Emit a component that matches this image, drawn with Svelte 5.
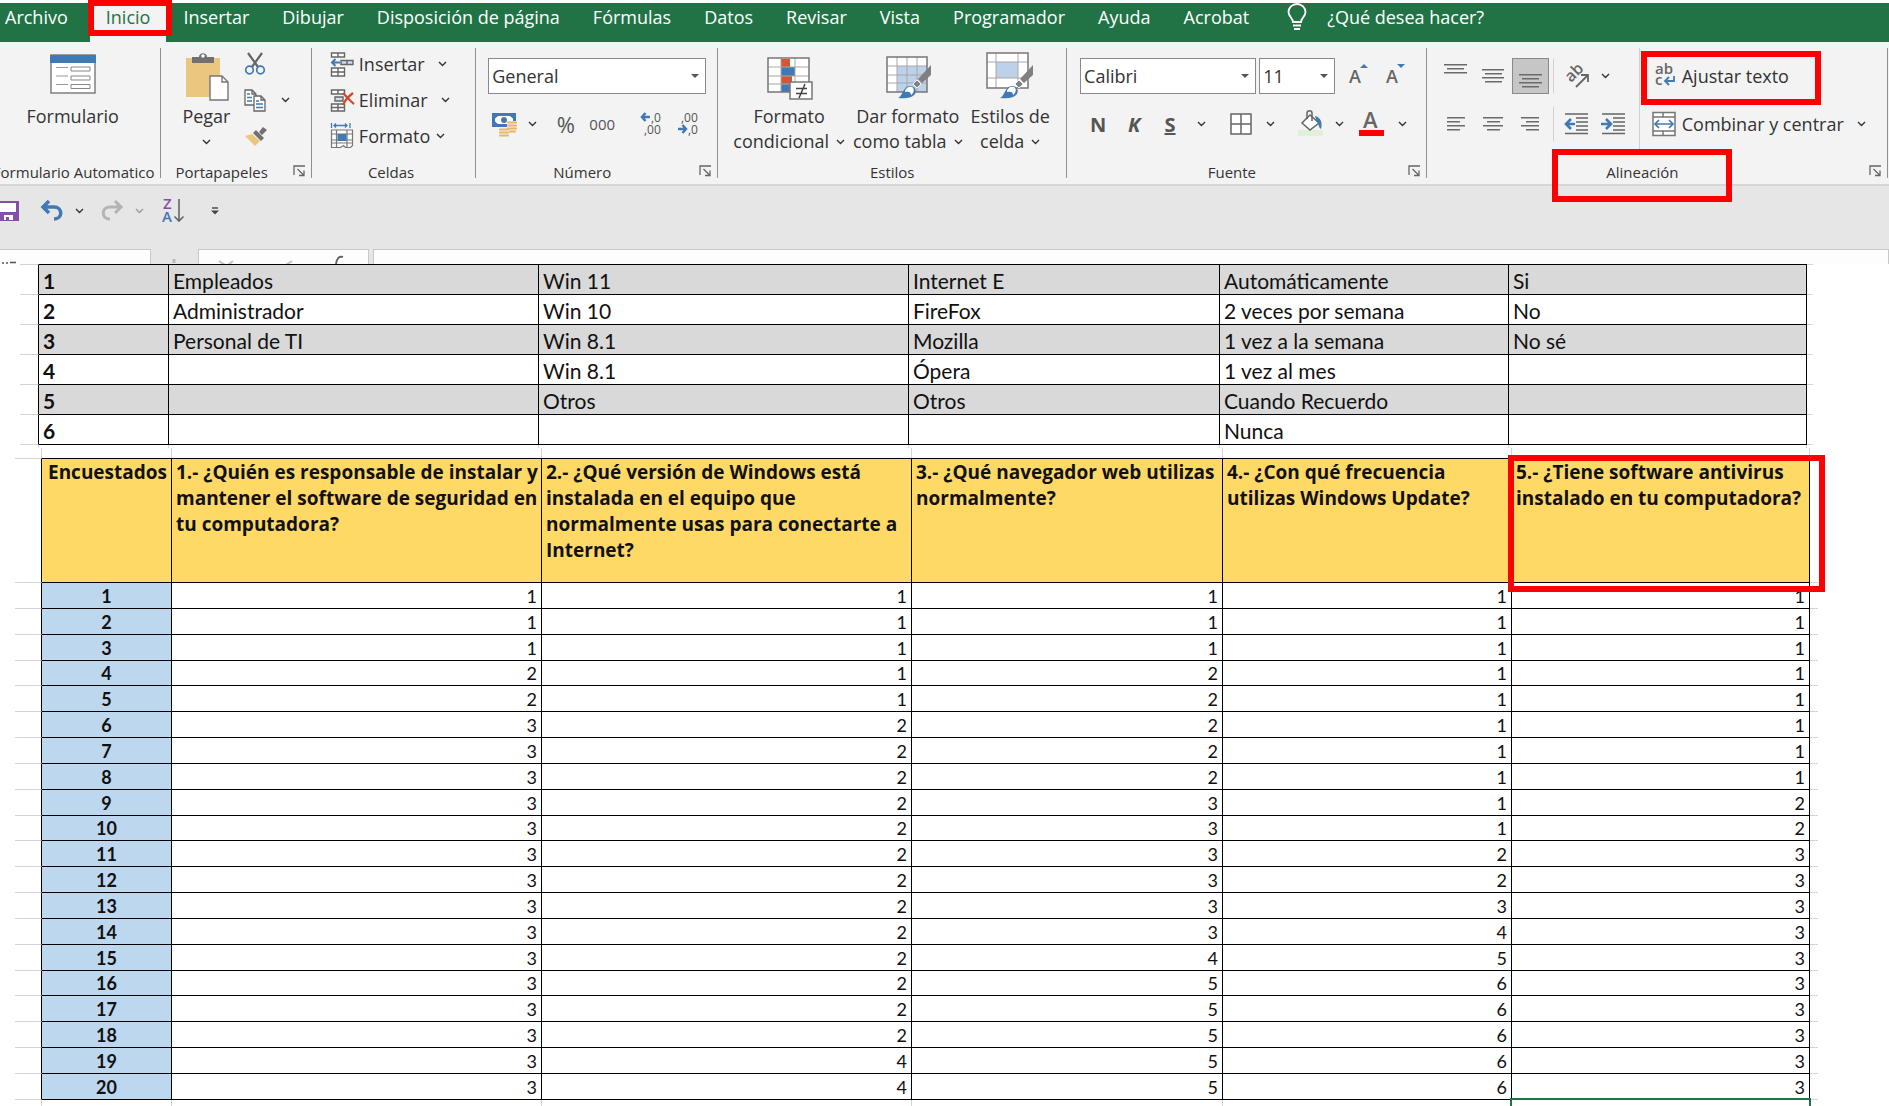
<script>
  const tabs = [
    'Archivo', 'Inicio', 'Insertar', 'Dibujar', 'Disposición de página', 'Fórmulas', 'Datos',
    'Revisar', 'Vista', 'Programador', 'Ayuda', 'Acrobat'
  ];
  let activeTab = $state('Inicio');

  let numberFormat = $state('General');
  let fontName = $state('Calibri');
  let fontSize = $state('11');

  const columns = [130, 370, 370, 311, 289, 298];

  const options = [
    ['Empleados', 'Win 11', 'Internet E', 'Automáticamente', 'Si'],
    ['Administrador', 'Win 10', 'FireFox', '2 veces por semana', 'No'],
    ['Personal de TI', 'Win 8.1', 'Mozilla', '1 vez a la semana', 'No sé'],
    ['', 'Win 8.1', 'Ópera', '1 vez al mes', ''],
    ['', 'Otros', 'Otros', 'Cuando Recuerdo', ''],
    ['', '', '', 'Nunca', '']
  ];

  const questions = [
    '1.- ¿Quién es responsable de instalar y mantener el software de seguridad en tu computadora?',
    '2.- ¿Qué versión de Windows está instalada en el equipo que normalmente usas para conectarte a Internet?',
    '3.- ¿Qué navegador web utilizas normalmente?',
    '4.- ¿Con qué frecuencia utilizas Windows Update?',
    '5.- ¿Tiene software antivirus instalado en tu computadora?'
  ];

  const answers = [
    [1, 1, 1, 1, 1], [1, 1, 1, 1, 1], [1, 1, 1, 1, 1], [2, 1, 2, 1, 1], [2, 1, 2, 1, 1],
    [3, 2, 2, 1, 1], [3, 2, 2, 1, 1], [3, 2, 2, 1, 1], [3, 2, 3, 1, 2], [3, 2, 3, 1, 2],
    [3, 2, 3, 2, 3], [3, 2, 3, 2, 3], [3, 2, 3, 3, 3], [3, 2, 3, 4, 3], [3, 2, 4, 5, 3],
    [3, 2, 5, 6, 3], [3, 2, 5, 6, 3], [3, 2, 5, 6, 3], [3, 4, 5, 6, 3], [3, 4, 5, 6, 3]
  ];
</script>

{#snippet chevron()}
  <svg class="chevron" width="9" height="6" viewBox="0 0 9 6"><path d="M1 1l3.500 3.500L8 1" fill="none" stroke="currentColor" stroke-width="1.400" /></svg>
{/snippet}

{#snippet drop(label)}
  <button class="drop" aria-label={label}>{@render chevron()}</button>
{/snippet}

{#snippet launcher(label)}
  <button class="launcher" aria-label={label}>
    <svg width="13" height="12" viewBox="0 0 13 12"><path d="M1 10V1h11M4.500 4l6 6M11 5.500v5H6" fill="none" stroke="#666" stroke-width="1.300" /></svg>
  </button>
{/snippet}

{#snippet lines(rows)}
  <svg width="24" height="24" viewBox="0 0 24 24">
    {#each rows as [x, y, w]}
      <rect {x} {y} width={w} height="1.500" fill="#6a6a6a" />
    {/each}
  </svg>
{/snippet}

{#snippet brush()}
  <path d="M47 13v10L38 31l-4-4z" fill="#808080" />
  <path d="M33 28l4 4-4 4-4-4z" fill="#808080" stroke="#f3f3f3" />
  <path d="M14 46c5-2 5-12 12-12 5 0 7 4 5 8-3 4-9 5-17 4z" fill="#4179b5" />
  <path d="M21 40c0-4 4-6 7-5 3 2 2 6-1 8 0-3-2-4-6-3z" fill="#fff" />
{/snippet}

{#snippet cols(left, right)}
  {@const total = columns.reduce((a, b) => a + b, left + right)}
  <colgroup>
    {#each [left, ...columns, right] as c}
      <col style="width: {(c / total) * 100}%" />
    {/each}
  </colgroup>
{/snippet}

<div class="app">
  <nav class="tabs">
    {#each tabs as tab}
      <button class="tab" class:active={tab === activeTab} onclick={() => (activeTab = tab)}>{tab}</button>
    {/each}
    <button class="tell-me">
      <svg width="20" height="28" viewBox="0 0 20 28">
        <path d="M6 19c0-4-4.500-5-4.500-10a8.500 8 0 0 1 17 0c0 5-4.500 6-4.500 10z" fill="none" stroke="#fff" stroke-width="1.800" />
        <path d="M6 22.500h8M7 26h6" stroke="#fff" stroke-width="2" />
      </svg>
      ¿Qué desea hacer?
    </button>
  </nav>

  <div class="ribbon">
    <section class="group form">
      <div class="body">
        <button class="big">
          <svg width="48" height="48" viewBox="0 0 48 48">
            <rect x="2" y="3" width="44" height="38" fill="#fff" stroke="#777" stroke-width="1.400" />
            <rect x="1" y="3" width="46" height="8" fill="#4179b5" />
            <path d="M7 15.500h12M7 24h12M7 32.500h12" stroke="#999" />
            <path d="M22 15h19v4H22zM22 24h19v4H22zM22 32.500h19v4H22z" fill="none" stroke="#888" />
          </svg>
          <span>Formulario</span>
        </button>
      </div>
      <footer><h2>Formulario Automatico</h2></footer>
    </section>

    <section class="group clipboard">
      <div class="body">
        <button class="big">
          <svg width="48" height="48" viewBox="0 0 48 48">
            <path d="M4 6h34v39H4z" fill="#ebc67f" />
            <path d="M10 11V5h7c0-5 8-5 8 0h7v6z" fill="#707070" />
            <circle cx="21" cy="4" r="1.800" fill="#fff" />
            <path d="M28 24h12l6 6v18H28z" fill="#fff" stroke="#777" stroke-width="1.400" />
            <path d="M40 24v6h6" fill="none" stroke="#777" stroke-width="1.400" />
          </svg>
          <span>Pegar</span>
          <span>{@render chevron()}</span>
        </button>
        <div class="stack">
          <button class="small" aria-label="Cortar">
            <svg width="24" height="24" viewBox="0 0 24 24">
              <path d="M5 1l10 14M19 1L9 15" stroke="#666" stroke-width="2.200" />
              <circle cx="6.500" cy="18" r="3.800" fill="none" stroke="#4179b5" stroke-width="1.700" />
              <circle cx="17.500" cy="18" r="3.800" fill="none" stroke="#4179b5" stroke-width="1.700" />
            </svg>
          </button>
          <div class="line">
            <button class="small" aria-label="Copiar">
              <svg width="24" height="24" viewBox="0 0 24 24">
                <path d="M2 2h7l4 4v11H2zM9 2v4h4" fill="#fff" stroke="#666" stroke-width="1.300" />
                <path d="M4 6h3M4 9.500h5M4 13h5" stroke="#4179b5" stroke-width="1.300" />
                <path d="M11 8h7l4 4v11H11zM18 8v4h4" fill="#fff" stroke="#666" stroke-width="1.300" />
                <path d="M13 13h3M13 16h7M13 19.500h7" stroke="#4179b5" stroke-width="1.300" />
              </svg>
            </button>
            {@render drop('Opciones de copiar')}
          </div>
          <button class="small" aria-label="Copiar formato">
            <svg width="24" height="24" viewBox="0 0 24 24">
              <path d="M2 12l7-2 8 7-5 5z" fill="#ebc67f" />
              <path d="M10 9l3-3 8 8-3 3zM16 8l4-5 4 3-5 5z" fill="#707070" />
            </svg>
          </button>
        </div>
      </div>
      <footer><h2>Portapapeles</h2>{@render launcher('Opciones del portapapeles')}</footer>
    </section>

    <section class="group cells">
      <div class="body stack">
        <button class="row">
          <svg width="24" height="24" viewBox="0 0 24 24">
            <path d="M1.500 1h13v4h-13zM8 1v4M1.500 16h13v8h-13zM8 16v8M1.500 20h13" fill="#fff" stroke="#666" stroke-width="1.400" />
            <path d="M11 8.500h12v4H11zM17 8.500v4" fill="#c9dcf0" stroke="#666" stroke-width="1.400" />
            <path d="M10 10.500H2M5.500 7L2 10.500 5.500 14" fill="none" stroke="#4179b5" stroke-width="2" />
          </svg>
          Insertar <i class="wide">{@render chevron()}</i>
        </button>
        <button class="row">
          <svg width="24" height="24" viewBox="0 0 24 24">
            <path d="M1.500 2h13v4h-13zM8 2v4M1.500 16h13v7h-13zM8 16v7M1.500 19.500h13" fill="#fff" stroke="#666" stroke-width="1.400" />
            <path d="M5 9h8v4H5z" fill="#c9dcf0" stroke="#666" stroke-width="1.400" />
            <path d="M13 5c4 4 7 8 11 11M23 5c-4 3-8 7-10 12" fill="none" stroke="#d24726" stroke-width="2.200" />
          </svg>
          Eliminar <i class="wide">{@render chevron()}</i>
        </button>
        <button class="row">
          <svg width="24" height="26" viewBox="0 0 24 26">
            <path d="M1.500 0v5M20 0v5M4 2.500h13M6 .500L4 2.500l2 2M15 .500l2 2-2 2" fill="none" stroke="#4179b5" stroke-width="1.300" />
            <path d="M1.500 7h21v13h-21zM6.500 7v17M17 7v17M1.500 11h21M1.500 17h21M1.500 20v4.500h9l3-2 2 2h5l2-2V20" fill="#fff" stroke="#777" stroke-width="1.200" />
            <path d="M7.500 11h9v7h-9z" fill="#4179b5" />
          </svg>
          Formato <i>{@render chevron()}</i>
        </button>
      </div>
      <footer><h2>Celdas</h2></footer>
    </section>

    <section class="group number">
      <div class="body rows">
        <div class="line">
          <label class="combo grow">
            <select bind:value={numberFormat} aria-label="Formato de número"><option>General</option></select>
            <svg width="10" height="6" viewBox="0 0 10 6"><path d="M1 1h8L5 5z" fill="#555" /></svg>
          </label>
        </div>
        <div class="line">
          <button class="tool" aria-label="Formato de contabilidad">
            <svg width="26" height="26" viewBox="0 0 26 26">
              <path d="M1 2h24v14H1z" fill="#4179b5" />
              <path d="M4 5h18v8H4z" fill="#fff" />
              <path d="M3 8.500L7 5H3zM3 9.500L7 13H3zM23 8.500L19 5h4z" fill="#4179b5" />
              <circle cx="13" cy="9" r="3" fill="#4179b5" />
              <path d="M16 10h10v12H16zM8 17h10v9H8z" fill="#f3f3f3" />
              <path d="M17 11.500h8M17 14.500h8M17 17.500h8M19 20.500h5M9 18.500h8M9 21.500h8M9 24.500h8" stroke="#e9b567" stroke-width="2.200" stroke-linecap="round" />
            </svg>
          </button>
          {@render drop('Más formatos de contabilidad')}
          <button class="tool percent">%</button>
          <button class="tool thousands">000</button>
          <span class="rule"></span>
          <button class="tool" aria-label="Aumentar decimales">
            <svg width="24" height="30" viewBox="0 0 24 30">
              <path d="M10 8H2M5.500 4L2 8l3.500 4" fill="none" stroke="#4179b5" stroke-width="2.500" />
              <text x="11" y="13" class="dec">,0</text><text x="4" y="25" class="dec">,00</text>
            </svg>
          </button>
          <button class="tool" aria-label="Disminuir decimales">
            <svg width="24" height="30" viewBox="0 0 24 30">
              <text x="4" y="13" class="dec">,00</text><text x="11" y="25" class="dec">,0</text>
              <path d="M1 20h8M5.500 16L9 20l-3.500 4" fill="none" stroke="#4179b5" stroke-width="2.500" />
            </svg>
          </button>
        </div>
      </div>
      <footer><h2>Número</h2>{@render launcher('Opciones de número')}</footer>
    </section>

    <section class="group styles">
      <div class="body">
        <button class="big">
          <svg width="48" height="48" viewBox="0 0 48 48">
            <path d="M3 6h41v34H3z" fill="#fff" />
            <path d="M16 7h9v8h-9zM16 24h11v8H16z" fill="#d65532" />
            <path d="M16 15h14v9H16zM16 32h9v8h-9z" fill="#4179b5" />
            <path d="M16 6v34M30 6v34M3 15h41M3 24h41M3 32h41" stroke="#a8a8a8" />
            <path d="M3 6h41v34H3z" fill="none" stroke="#777" stroke-width="1.500" />
            <path d="M25 30h22v17H25z" fill="#fff" stroke="#777" stroke-width="1.500" />
            <path d="M31 36.500h11M31 41.500h11M40 32l-6 14" stroke="#444" stroke-width="1.500" />
          </svg>
          <span>Formato</span>
          <span>condicional <i>{@render chevron()}</i></span>
        </button>
        <button class="big">
          <svg width="48" height="48" viewBox="0 0 48 48">
            <path d="M3 5h40v35H3z" fill="#fff" />
            <path d="M13 14h30v26H13z" fill="#bdd1e9" />
            <path d="M13 5v35M23 5v35M33 5v35M3 14h40M3 23h40M3 31h40" stroke="#a8a8a8" />
            <path d="M3 5h40v35H3z" fill="none" stroke="#777" stroke-width="1.500" />
            {@render brush()}
          </svg>
          <span>Dar formato</span>
          <span>como tabla <i>{@render chevron()}</i></span>
        </button>
        <button class="big">
          <svg width="48" height="48" viewBox="0 0 48 48">
            <path d="M1 1h41v35H1z" fill="#fff" />
            <path d="M10 10h22v16H10z" fill="#bdd1e9" />
            <path d="M10 1v35M32 1v35M1 10h41M1 26h41" stroke="#a8a8a8" />
            <path d="M1 1h41v35H1z" fill="none" stroke="#777" stroke-width="1.500" />
            {@render brush()}
          </svg>
          <span>Estilos de</span>
          <span>celda <i>{@render chevron()}</i></span>
        </button>
      </div>
      <footer><h2>Estilos</h2></footer>
    </section>

    <section class="group font">
      <div class="body rows">
        <div class="line">
          <label class="combo name">
            <select bind:value={fontName} aria-label="Fuente"><option>Calibri</option></select>
            <svg width="10" height="6" viewBox="0 0 10 6"><path d="M1 1h8L5 5z" fill="#555" /></svg>
          </label>
          <label class="combo size">
            <select bind:value={fontSize} aria-label="Tamaño de fuente"><option>11</option></select>
            <svg width="10" height="6" viewBox="0 0 10 6"><path d="M1 1h8L5 5z" fill="#555" /></svg>
          </label>
          <button class="tool" aria-label="Aumentar tamaño de fuente">
            <svg width="22" height="26" viewBox="0 0 22 26"><text x="1" y="20" class="letter">A</text><path d="M12 5l4-4 4 4z" fill="#4179b5" /></svg>
          </button>
          <button class="tool" aria-label="Disminuir tamaño de fuente">
            <svg width="22" height="26" viewBox="0 0 22 26"><text x="1" y="20" class="letter">A</text><path d="M12 1h8l-4 4z" fill="#4179b5" /></svg>
          </button>
        </div>
        <div class="line">
          <button class="tool bold">N</button>
          <button class="tool bold italic">K</button>
          <button class="tool bold underline">S</button>
          {@render drop('Tipos de subrayado')}
          <span class="rule"></span>
          <button class="tool slim" aria-label="Bordes">
            <svg width="24" height="24" viewBox="0 0 24 24"><path d="M2 2h20v20H2zM12 2v20M2 12h20" fill="#fff" stroke="#666" stroke-width="1.500" /></svg>
          </button>
          {@render drop('Más bordes')}
          <span class="rule"></span>
          <button class="tool slim" aria-label="Color de relleno">
            <svg width="26" height="28" viewBox="0 0 26 28">
              <path d="M1 20h25v6H1z" fill="#e2efda" />
              <path d="M13 5l9 8-9 7-8-7z" fill="#fff" stroke="#666" stroke-width="1.500" />
              <path d="M10 9V3c0-3 5-3 5 0v8" fill="none" stroke="#666" stroke-width="1.500" />
              <path d="M18 6c5 1 8 6 6 13-3-2-2-6-4-7z" fill="#4179b5" />
            </svg>
          </button>
          {@render drop('Más colores de relleno')}
          <button class="tool" aria-label="Color de fuente">
            <svg width="26" height="28" viewBox="0 0 26 28"><text x="5" y="18" class="letter colour">A</text><path d="M1 20h25v6H1z" fill="#f00" /></svg>
          </button>
          {@render drop('Más colores de fuente')}
        </div>
      </div>
      <footer><h2>Fuente</h2>{@render launcher('Opciones de fuente')}</footer>
    </section>

    <section class="group align">
      <div class="body">
        <div class="rows">
          <div class="line">
            <button class="tool" aria-label="Alinear arriba">{@render lines([[0, 0, 23], [3, 4, 17], [0, 8, 23]])}</button>
            <button class="tool" aria-label="Alinear en el medio">{@render lines([[1, 5, 22], [4, 9, 17], [1, 13, 22], [4, 17, 17]])}</button>
            <button class="tool pressed" aria-label="Alinear abajo">{@render lines([[1, 10, 23], [4, 14, 17], [1, 18, 23], [4, 22, 17]])}</button>
            <span class="rule"></span>
            <button class="tool" aria-label="Orientación">
              <svg width="26" height="26" viewBox="0 0 26 26">
                <text x="0" y="0" transform="translate(8 20) rotate(-45)" class="letter turned">ab</text>
                <path d="M13 24L24 13M18 12h7v7" fill="none" stroke="#666" stroke-width="1.800" />
              </svg>
            </button>
            {@render drop('Más orientaciones')}
          </div>
          <div class="line">
            <button class="tool" aria-label="Alinear a la izquierda">{@render lines([[3, 5, 18], [3, 9, 13], [3, 13, 18], [3, 17, 13]])}</button>
            <button class="tool" aria-label="Centrar">{@render lines([[2, 5, 20], [6, 9, 13], [2, 13, 20], [6, 17, 13]])}</button>
            <button class="tool" aria-label="Alinear a la derecha">{@render lines([[3, 5, 18], [8, 9, 13], [3, 13, 18], [8, 17, 13]])}</button>
            <span class="rule"></span>
            <button class="tool" aria-label="Disminuir sangría">
              <svg width="24" height="24" viewBox="0 0 24 24">
                <path d="M1 2h23M12 6h12M12 10h12M12 14h12M12 18h12M1 21.500h23" stroke="#666" stroke-width="1.400" />
                <path d="M11 12H2M7 7l-5 5 5 5" fill="none" stroke="#4179b5" stroke-width="2.600" />
              </svg>
            </button>
            <button class="tool" aria-label="Aumentar sangría">
              <svg width="24" height="24" viewBox="0 0 24 24">
                <path d="M1 2h23M12 6h12M12 10h12M12 14h12M12 18h12M1 21.500h23" stroke="#666" stroke-width="1.400" />
                <path d="M0 12h9M5 7l5 5-5 5" fill="none" stroke="#4179b5" stroke-width="2.600" />
              </svg>
            </button>
          </div>
        </div>
        <div class="rows wrap">
          <button class="row marked">
            <svg width="26" height="30" viewBox="0 0 26 30">
              <text x="4" y="13" class="letter ab">ab</text><text x="4" y="24" class="letter ab">c</text>
              <path d="M23 15v5h-8M18 16l-4 4 4 4" fill="none" stroke="#4179b5" stroke-width="1.800" />
            </svg>
            Ajustar texto
          </button>
          <button class="row">
            <svg width="26" height="26" viewBox="0 0 26 26">
              <path d="M2 1.500h22v23H2zM2 6h22M2 20h22M12 1.500V6M12 20v4.500" fill="#fff" stroke="#777" stroke-width="1.500" />
              <path d="M4 13h18M8 9l-4 4 4 4M18 9l4 4-4 4" fill="none" stroke="#4179b5" stroke-width="1.700" />
            </svg>
            Combinar y centrar <i class="wide">{@render chevron()}</i>
          </button>
        </div>
      </div>
      <footer><h2 class="marked">Alineación</h2>{@render launcher('Opciones de alineación')}</footer>
    </section>
  </div>

  <div class="quick">
    <button class="save" aria-label="Guardar">
      <svg width="20" height="22" viewBox="0 0 20 22">
        <path d="M-3 1h22v20H-3z" fill="#8350a4" /><path d="M0 3h16v9H0zM4 15h9v5H4z" fill="#fff" /><path d="M6 17h3v3H6z" fill="#8350a4" />
      </svg>
    </button>
    <button class="step" aria-label="Deshacer">
      <svg width="24" height="22" viewBox="0 0 24 22"><path d="M9 1L3 7l6 6M3 7h11c9 0 9 12 0 12" fill="none" stroke="#4179b5" stroke-width="3.500" /></svg>
    </button>
    {@render drop('Lista de deshacer')}
    <button class="step off" aria-label="Rehacer" disabled>
      <svg width="24" height="22" viewBox="0 0 24 22"><path d="M15 1l6 6-6 6M21 7H10c-9 0-9 12 0 12" fill="none" stroke="#b4b4b4" stroke-width="3" /></svg>
    </button>
    <span class="faded">{@render drop('Lista de rehacer')}</span>
    <button class="sort" aria-label="Ordenar de Z a A">
      <svg width="24" height="30" viewBox="0 0 24 30">
        <text x="2" y="13" class="letter z">Z</text><text x="1" y="26" class="letter a">A</text>
        <path d="M18 3v22M13.500 20.500L18 25l4.500-4.500" fill="none" stroke="#666" stroke-width="1.600" />
      </svg>
    </button>
    <button class="more" aria-label="Personalizar barra de acceso rápido">
      <svg width="8" height="8" viewBox="0 0 8 8"><path d="M1 1h6" stroke="#444" stroke-width="1.400" /><path d="M0 3.500h8L4 7.500z" fill="#444" /></svg>
    </button>
  </div>

  <div class="formula">
    <div class="cell-name"><svg width="20" height="14" viewBox="0 0 20 14"><path d="M2 13h2M6 13h2M10 12.500h6" stroke="#555" stroke-width="1.500" /></svg></div>
    <div class="dots"><svg width="47" height="14" viewBox="0 0 47 14"><path d="M23 10v4" stroke="#bbb" stroke-width="3" /></svg></div>
    <div class="checks">
      <svg width="160" height="14" viewBox="0 0 160 14" fill="none" stroke="#c4c4c4" stroke-width="2">
        <path d="M20 11l6 4M34 11l-5 4M93 11l-6 4" /><path d="M137 14c1-6 3-8 7-7" stroke="#666" />
      </svg>
    </div>
    <div class="entry"></div>
  </div>

  <main>
    <table class="options">
      {@render cols(19, 6)}
      <tbody>
        {#each options as row, i}
          <tr>
            <td class="edge"></td>
            <th scope="row">{i + 1}</th>
            {#each row as value}
              <td>{value}</td>
            {/each}
            <td class="edge"></td>
          </tr>
        {/each}
      </tbody>
    </table>

    <div class="spacer top"><table>{@render cols(19, 6)}<tbody><tr><td></td>{#each columns as _}<td></td>{/each}<td></td></tr></tbody></table></div>
    <div class="spacer"><table>{@render cols(27, 8)}<tbody><tr><td></td>{#each columns as _}<td></td>{/each}<td></td></tr></tbody></table></div>

    <table class="answers">
      {@render cols(27, 8)}
      <thead>
        <tr>
          <td class="edge"></td>
          <th class="people" scope="col">Encuestados</th>
          {#each questions as question, i}
            <th scope="col" class:marked={i === 4}>{question}</th>
          {/each}
          <td class="edge"></td>
        </tr>
      </thead>
      <tbody>
        {#each answers as row, i}
          <tr>
            <td class="edge"></td>
            <th scope="row">{i + 1}</th>
            {#each row as value}
              <td>{value}</td>
            {/each}
            <td class="edge"></td>
          </tr>
        {/each}
      </tbody>
      <tfoot>
        <tr>
          <td class="edge"></td>
          {#each columns as _, i}
            <td class:selected={i === 5}></td>
          {/each}
          <td class="edge"></td>
        </tr>
      </tfoot>
    </table>
  </main>
</div>

<style>
  :global(body) {
    background: #fff;
    overflow: hidden;
  }

  * {
    box-sizing: border-box;
  }

  .app {
    font-family: 'Open Sans', 'Segoe UI', sans-serif;
    font-size: 18px;
    color: #333;
    padding-top: 3px;
  }

  button {
    font: inherit;
    color: inherit;
    background: none;
    border: 0;
    padding: 0;
    white-space: nowrap;
    display: flex;
    align-items: center;
    justify-content: center;
    flex-shrink: 0;
  }

  svg {
    display: block;
    flex-shrink: 0;
    overflow: visible;
  }

  i {
    font-style: normal;
  }

  /* red callout frames */
  .marked,
  .tab.active {
    position: relative;
  }

  .marked::after,
  .tab.active::after {
    content: '';
    position: absolute;
    border: 6px solid #f00;
    pointer-events: none;
    z-index: 2;
  }

  /* tabs */
  .tabs {
    display: flex;
    height: 39px;
    background: #217346;
    color: #fff;
  }

  .tab {
    padding: 0 16px 11px 17px;
    line-height: 28px;
  }

  .tab:first-child {
    padding-left: 5px;
    padding-right: 22px;
  }

  .tab.active {
    background: #f3f3f3;
    color: #217346;
    padding: 0 16px 11px;
  }

  .tab.active::after {
    inset: -3px -6px 6px -2px;
  }

  .tell-me {
    gap: 20px;
    padding: 0 22px 11px;
  }

  /* ribbon */
  .ribbon {
    display: flex;
    height: 144px;
    padding: 6px 1px 6px 0;
    background: #f3f3f3;
    border-bottom: 2px solid #d5d5d5;
  }

  .group {
    display: flex;
    flex-direction: column;
    min-width: 0;
    height: 130px;
    border-right: 1px solid #8f8f8f;
  }

  .form { flex: 161 1 0; }
  .clipboard { flex: 150 1 0; }
  .cells { flex: 164 1 0; }
  .number { flex: 242 1 0; }
  .styles { flex: 349 1 0; }
  .font { flex: 360 1 0; }
  .align { flex: 462 1 0; }

  .body {
    display: flex;
    flex: 1;
  }

  footer {
    display: flex;
    align-items: center;
    justify-content: center;
    position: relative;
    height: 22px;
    margin-bottom: -5px;
  }

  h2 {
    margin: 0;
    font-size: 15px;
    font-weight: 400;
    line-height: 22px;
    white-space: nowrap;
    color: #333;
  }

  .launcher {
    position: absolute;
    right: 5px;
    top: 4px;
  }

  .big {
    flex-direction: column;
    justify-content: flex-start;
    padding-top: 4px;
    line-height: 25px;
  }

  .big svg:first-child {
    margin-bottom: 4px;
  }

  .big span {
    display: flex;
    align-items: center;
    min-height: 25px;
    gap: 7px;
  }

  .big span .chevron {
    margin: 0;
  }

  .form .body {
    justify-content: center;
  }

  .styles .body {
    padding-left: 15px;
    gap: 8px;
  }

  .form .big {
    margin-right: 15px;
  }

  .form footer {
    justify-content: flex-end;
    padding-right: 6px;
  }

  .clipboard .body {
    padding-left: 21px;
    gap: 13px;
  }

  .clipboard .drop {
    margin-left: 5px;
  }

  .clipboard footer,
  .number footer,
  .font footer,
  .align footer {
    padding-right: 29px;
  }

  .stack {
    display: flex;
    flex-direction: column;
    align-items: flex-start;
    margin-top: -2px;
  }

  .small {
    height: 36px;
  }

  .row {
    height: 36px;
    gap: 5px;
    justify-content: flex-start;
  }

  .row i {
    margin-left: 1px;
  }

  .row .wide {
    margin-left: 8px;
  }

  .cells .body {
    padding-left: 18px;
  }

  .cells footer {
    padding-right: 5px;
    margin-top: 2px;
  }

  .line {
    display: flex;
    align-items: center;
    height: 36px;
  }

  .rows {
    display: flex;
    flex-direction: column;
    gap: 12px;
    padding-top: 10px;
  }

  .number .rows,
  .font .rows {
    padding-left: 12px;
    padding-right: 11px;
  }

  .font .rows {
    padding-left: 13px;
  }

  .combo {
    position: relative;
    display: flex;
  }

  .combo select {
    width: 100%;
    height: 36px;
    padding: 0 3px;
    font: inherit;
    color: #333;
    background: #fff;
    border: 1px solid #8a8a8a;
    border-radius: 0;
    appearance: none;
  }

  .combo svg {
    position: absolute;
    right: 6px;
    top: 15px;
  }

  .grow { flex: 1; }
  .name { width: 180px; }
  .size { width: 77px; margin: 0 6px 0 3px; }

  .tool {
    width: 37px;
    height: 36px;
    color: #555;
  }

  .tool.slim {
    width: 33px;
  }

  .drop {
    width: 26px;
    height: 34px;
  }

  .align .drop {
    width: 22px;
  }

  .rule {
    width: 1px;
    height: 34px;
    margin: 0 5px;
    background: #d0d0d0;
  }

  .number .tool:first-child,
  .number .percent {
    width: 31px;
  }

  .number .percent {
    font-size: 22px;
    margin-left: 5px;
  }

  .number .thousands {
    width: 42px;
    font-size: 15px;
  }

  .tool.bold {
    font-size: 20px;
    font-weight: 700;
    width: 36px;
  }

  .italic {
    font-style: italic;
  }

  .underline {
    text-decoration: underline;
  }

  .pressed {
    background: #c6c6c6;
    border: 1px solid #8a8a8a;
  }

  .dec {
    font-size: 12px;
    fill: #555;
  }

  .letter {
    font-size: 18px;
    font-weight: 600;
    fill: #666;
  }

  .letter.colour {
    font-size: 22px;
  }

  .letter.ab {
    font-size: 15px;
  }

  .letter.turned {
    font-size: 16px;
  }

  .letter.z {
    font-size: 15px;
    fill: #8350a4;
  }

  .letter.a {
    font-size: 15px;
    fill: #4179b5;
  }

  .align .rows {
    padding-left: 11px;
  }

  .align .rule {
    margin: 0 4px;
  }

  .align .wrap {
    align-items: flex-start;
    margin: 0 0 8px 7px;
    border-left: 1px solid #d0d0d0;
  }

  .row.marked::after {
    inset: -7px -32px -11px -10px;
  }

  h2.marked::after {
    inset: -12px -54px -19px -54px;
  }

  /* quick access */
  .quick {
    display: flex;
    align-items: center;
    height: 63px;
    padding-bottom: 13px;
    background: #e6e6e6;
  }

  .step {
    margin-left: 20px;
  }

  .quick .drop {
    width: 30px;
  }

  .step.off {
    margin-left: 6px;
  }

  .faded {
    opacity: 0.4;
  }

  .sort {
    margin-left: 7px;
  }

  .more {
    margin-left: 26px;
  }

  .formula {
    display: flex;
    height: 15px;
    background: #e6e6e6;
    overflow: hidden;
  }

  .formula div {
    border: 1px solid #c8c8c8;
    border-bottom: 0;
    background: #fdfdfd;
  }

  .formula .cell-name {
    width: 151px;
    border-left: 0;
  }

  .formula .dots {
    width: 47px;
    border: 0;
    background: none;
  }

  .checks {
    width: 171px;
    margin-right: 4px;
  }

  .entry {
    flex: 1;
  }

  /* sheet */
  table {
    width: 100%;
    table-layout: fixed;
    border-collapse: separate;
    border-spacing: 0;
    font-family: Lato, Calibri, sans-serif;
    color: #111;
  }

  td,
  th {
    padding: 0 4px;
    border-right: 1px solid #000;
    border-bottom: 1px solid #000;
    text-align: left;
    white-space: nowrap;
  }

  .edge {
    padding: 0;
    border-bottom-color: #d4d4d4;
  }

  .edge:last-child {
    border-right: 0;
  }

  .options,
  .spacer.top {
    margin-left: 20px;
    width: calc(100% - 96px);
  }

  .options {
    font-size: 21px;
    line-height: 26px;
  }

  .options tr {
    height: 30px;
  }

  .options th,
  .options td:not(.edge) {
    padding-top: 2px;
  }

  .options th {
    font-weight: 700;
  }

  .options tr:first-child {
    height: 31px;
  }

  .options tr:first-child td,
  .options tr:first-child th {
    border-top: 1px solid #000;
  }

  .options tr:first-child .edge {
    border-top-color: #d4d4d4;
  }

  .options tr:nth-child(odd) > :not(.edge) {
    background: #d9d9d9;
  }

  .spacer,
  .answers {
    margin-left: 15px;
    width: calc(100% - 86px);
  }

  .spacer {
    height: 10px;
    overflow: hidden;
  }

  .spacer.top {
    height: 3px;
  }

  .spacer tr {
    height: 10px;
  }

  .spacer td {
    border-bottom: 0;
    border-color: #d4d4d4;
    padding: 0;
  }

  .spacer td:last-child {
    border: 0;
  }

  .answers {
    font-size: 18px;
  }

  .answers thead tr {
    height: 125px;
  }

  .answers thead th {
    padding: 0 2px 0 4px;
    vertical-align: top;
    font-family: 'Open Sans', sans-serif;
    font-size: 19px;
    line-height: 26px;
    white-space: normal;
    background: #ffd966;
    border-top: 1px solid #000;
  }

  .answers thead .edge {
    border-top: 1px solid #d4d4d4;
  }

  .answers thead .people {
    text-align: center;
    white-space: nowrap;
  }

  .answers .marked::after {
    inset: -4px -16px -10px -4px;
  }

  .answers tbody tr {
    height: 26px;
    line-height: 24px;
  }

  .answers tbody tr:nth-child(6n + 4) {
    height: 25px;
  }

  .answers tbody th {
    text-align: center;
    background: #bdd7ee;
  }

  .answers tbody td {
    text-align: right;
  }

  .answers tfoot tr {
    height: 7px;
  }

  .answers tfoot td {
    padding: 0;
    border-color: #d4d4d4;
    border-bottom: 0;
  }

  .answers tfoot .selected {
    position: relative;
  }

  .answers tfoot .selected::after {
    content: '';
    position: absolute;
    inset: -2px -2px 0;
    border: 2px solid #217346;
    border-bottom: 0;
  }
</style>
